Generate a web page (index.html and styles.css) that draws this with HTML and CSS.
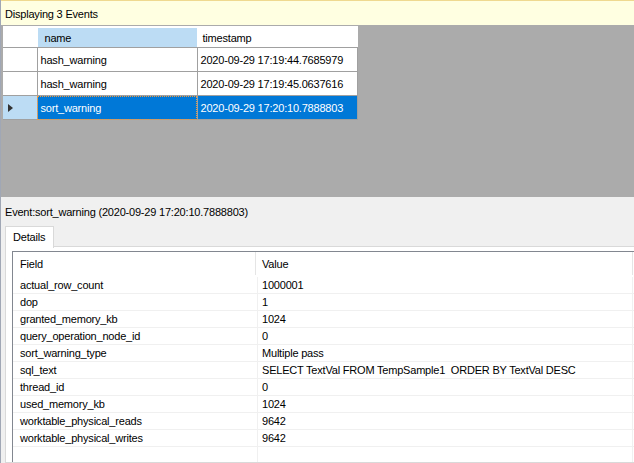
FILE: index.html
```html
<!DOCTYPE html>
<html>
<head>
<meta charset="utf-8">
<link rel="stylesheet" href="styles.css">
</head>
<body>
<div class="app">
  <div class="top">
    <div class="infobar">Displaying 3 Events</div>
    <div class="gridarea">
      <table class="grid">
        <colgroup><col class="col-rh"><col class="col-name"><col class="col-ts"></colgroup>
        <thead>
          <tr><th class="rh"></th><th class="hname">name</th><th class="hts">timestamp</th></tr>
        </thead>
        <tbody>
          <tr><td class="rh"></td><td>hash_warning</td><td>2020-09-29 17:19:44.7685979</td></tr>
          <tr><td class="rh"></td><td>hash_warning</td><td>2020-09-29 17:19:45.0637616</td></tr>
          <tr class="sel"><td class="rh"><span class="arrow"></span></td><td class="focus">sort_warning</td><td>2020-09-29 17:20:10.7888803</td></tr>
        </tbody>
      </table>
    </div>
  </div>
  <div class="bottom">
    <div class="eventlabel">Event:sort_warning (2020-09-29 17:20:10.7888803)</div>
    <div class="tabstrip"><div class="tab">Details</div></div>
    <div class="tabpanel">
      <div class="list">
        <div class="lhead">
          <div class="hc1">Field</div><div class="hsep"></div><div class="hc2">Value</div><div class="hsep"></div>
        </div>
        <div class="lrow"><div class="c1">actual_row_count</div><div class="c2">1000001</div></div>
        <div class="lrow"><div class="c1">dop</div><div class="c2">1</div></div>
        <div class="lrow"><div class="c1">granted_memory_kb</div><div class="c2">1024</div></div>
        <div class="lrow"><div class="c1">query_operation_node_id</div><div class="c2">0</div></div>
        <div class="lrow"><div class="c1">sort_warning_type</div><div class="c2">Multiple pass</div></div>
        <div class="lrow"><div class="c1">sql_text</div><div class="c2 pre">SELECT TextVal FROM TempSample1  ORDER BY TextVal DESC</div></div>
        <div class="lrow"><div class="c1">thread_id</div><div class="c2">0</div></div>
        <div class="lrow"><div class="c1">used_memory_kb</div><div class="c2">1024</div></div>
        <div class="lrow"><div class="c1">worktable_physical_reads</div><div class="c2">9642</div></div>
        <div class="lrow"><div class="c1">worktable_physical_writes</div><div class="c2">9642</div></div>
        <div class="lrow filler"><div class="c1"></div><div class="c2"></div></div>
      </div>
    </div>
  </div>
</div>
</body>
</html>
```
FILE: styles.css
```css
html, body {
  margin: 0;
  padding: 0;
}
body {
  font-family: "Liberation Sans", Arial, sans-serif;
  font-size: 11px;
  letter-spacing: -0.2px;
  color: #000;
  background: #f0f0f0;
}
.app {
  width: 633px;
  height: 463px;
  border-left: 1px solid #a0a7b5;
  display: flex;
  flex-direction: column;
  overflow: hidden;
}
.top {
  height: 197px;
  display: flex;
  flex-direction: column;
  flex: none;
}
.infobar {
  height: 24px;
  line-height: 26px;
  border-top: 1px solid #efd98f;
  background: #ffffe1;
  padding-left: 4px;
  flex: none;
}
.gridarea {
  flex: 1;
  background: #ababab;
  padding: 1px 0 0 2px;
}
.grid {
  border-collapse: collapse;
  table-layout: fixed;
  width: 354px;
  background: #fff;
}
.col-rh { width: 34px; }
.col-name { width: 160px; }
.col-ts { width: 160px; }
.grid th {
  font-weight: normal;
  text-align: left;
  height: 19px;
  padding: 0;
  border-top: 2px solid #fff;
  border-bottom: 1px solid #a0a0a0;
  background: #fff;
}
.grid th.hname {
  background: #bcdcf4;
  padding-left: 7px;
  border-left: 1px solid #fff;
  border-right: 1px solid #fff;
}
.grid th.hts {
  padding-left: 5px;
}
.grid td {
  height: 23px;
  padding: 0 0 0 3px;
  border-right: 1px solid #a0a0a0;
  border-bottom: 1px solid #a0a0a0;
  white-space: nowrap;
  overflow: hidden;
}
.grid td.rh {
  padding: 0 0 0 5px;
}
.grid tr.sel td {
  background: #0078d7;
  color: #fff;
}
.grid tr.sel td.rh {
  background: #bcdcf4;
}
.grid td.focus {
  outline: 1px dotted #f39a3c;
  outline-offset: -1px;
}
.arrow {
  display: block;
  width: 0;
  height: 0;
  border-left: 5px solid #333;
  border-top: 4.5px solid transparent;
  border-bottom: 4.5px solid transparent;
}
.bottom {
  flex: 1;
  display: flex;
  flex-direction: column;
  background: #f0f0f0;
  min-height: 0;
}
.eventlabel {
  padding-left: 4px;
  margin-top: 8px;
  line-height: 14px;
  height: 14px;
  flex: none;
}
.tabstrip {
  margin-top: 7px;
  height: 20px;
  display: flex;
  padding-left: 4px;
  flex: none;
  position: relative;
  z-index: 1;
}
.tab {
  width: 40px;
  height: 21px;
  line-height: 20px;
  padding-left: 7px;
  background: #fff;
  border: 1px solid #d9d9d9;
  border-bottom: none;
}
.tabpanel {
  flex: 1;
  margin-left: 4px;
  border: 1px solid #d9d9d9;
  border-right: none;
  background: #fff;
  padding: 4px 0 0 6px;
  display: flex;
  flex-direction: column;
  min-height: 0;
}
.list {
  flex: 1;
  border-top: 1px solid #828790;
  border-left: 1px solid #828790;
  background: #fff;
  display: flex;
  flex-direction: column;
  overflow: hidden;
}
.lhead {
  height: 25px;
  display: flex;
  flex: none;
}
.hc1 {
  width: 235px;
  padding-left: 7px;
  line-height: 24px;
}
.hsep {
  width: 1px;
  height: 23px;
  background: #e5e5e5;
}
.hc2 {
  width: 370px;
  padding-left: 6px;
  line-height: 24px;
}
.lrow {
  display: flex;
  height: 16px;
  border-bottom: 1px solid #f0f0f0;
  flex: none;
}
.lrow .c1 {
  width: 237px;
  padding-left: 7px;
  border-right: 1px solid #f0f0f0;
  line-height: 16px;
  white-space: nowrap;
}
.lrow .c2 {
  width: 370px;
  padding-left: 4px;
  border-right: 1px solid #f0f0f0;
  line-height: 16px;
  white-space: nowrap;
}
.lrow .pre {
  white-space: pre;
}
.lrow.filler {
  flex: 1;
  border-bottom: none;
}
```
